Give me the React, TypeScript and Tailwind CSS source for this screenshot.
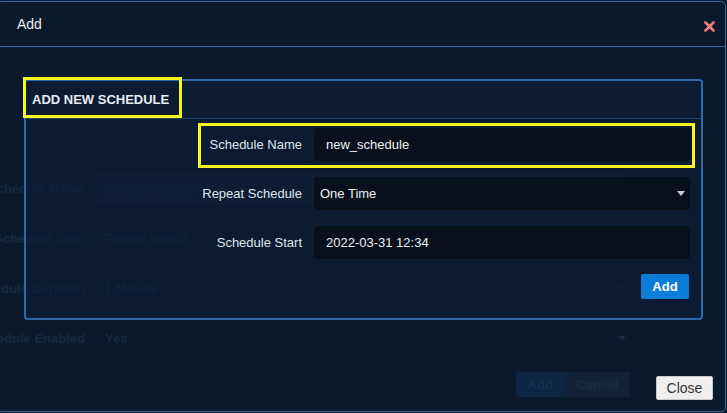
import React from "react";

function Caret({ className }: { className: string }) {
    return (
        <svg width="8" height="5" viewBox="0 0 8 5" className={className}>
            <path d="M0 0 L8 0 L4 5 Z" fill="currentColor" />
        </svg>
    );
}

const ghostRows = [
    { label: "Schedule Name", value: "new_schedule", box: true },
    { label: "Schedule Start", value: "Please Select", box: false },
    { label: "Schedule Duration", value: "1 Minute", box: false, caret: true },
    { label: "Schedule Enabled", value: "Yes", box: false, caret: true },
];

function GhostPage() {
    // the form that sits behind the modal, seen through it
    return (
        <div className="flex flex-col gap-[17px] pt-[172px] text-[13px] font-bold text-[#142943]">
            {ghostRows.map(r => (
                <div key={r.label} className="flex h-[33px] items-center">
                    <div className="flex w-[85px] shrink-0 justify-end whitespace-nowrap">{r.label}</div>
                    <div className={`ml-[10px] flex h-full w-[535px] items-center justify-between rounded-[4px] pl-[10px] pr-[4px] ${r.box ? "bg-[#0e1f33]" : ""}`}>
                        <span>{r.value}</span>
                        {r.caret && <Caret className="text-[#172a42]" />}
                    </div>
                </div>
            ))}
            <div className="ml-[516px] flex h-[25px]">
                <div className="flex w-[49px] items-center justify-center bg-[#0c2543] text-[#16304d]">Add</div>
                <div className="flex w-[65px] items-center justify-center bg-[#112238] text-[#182a40]">Cancel</div>
            </div>
        </div>
    );
}

function Field({ label, children }: { label: string; children: React.ReactNode }) {
    return (
        <div className="flex items-center gap-[12px]">
            <div className="w-[276px] text-right text-[13px] text-[#dfe5ec]">{label}</div>
            <div className="flex h-[33px] w-[376px] items-center justify-between rounded-[4px] bg-[#07101b] text-[13px] text-[#eef1f4]">
                {children}
            </div>
        </div>
    );
}

export default function App() {
    return (
        <div className="relative h-[413px] w-[727px] overflow-hidden bg-[#0a1a2c] font-['Liberation_Sans',Arial,sans-serif]">
            <GhostPage />

            <div className="absolute bottom-[1px] left-[-3px] right-[1px] top-[1px] flex flex-col rounded-[5px] border border-[#2d6aa5]">
                <div className="flex h-[45px] shrink-0 items-center justify-between border-b border-[#2d6aa5] pl-[19px] pr-[10px]">
                    <span className="text-[14px] text-[#e8edf2]">Add</span>
                    <svg width="11" height="11" viewBox="0 0 11 11" className="mt-[5px]">
                        <path d="M1.5 1.5 L9.5 9.5 M9.5 1.5 L1.5 9.5" stroke="#e06a6a" strokeWidth="3" strokeLinecap="round" />
                        <path d="M2 2 L9 9 M9 2 L2 9" stroke="#f5b5b5" strokeWidth="0.8" />
                    </svg>
                </div>

                <div className="flex flex-1 flex-col">
                    <div className="relative ml-[26px] mt-[32px] w-[679px] rounded-[4px] border-2 border-[#2d6aa5] bg-[#0c1d37]/60">
                        <div className="flex h-[38px] items-center border-b border-[#1c446c] pl-[6px] text-[13px] font-bold text-[#e8edf2]">
                            ADD NEW SCHEDULE
                        </div>
                        <div className="absolute left-[-3px] top-[-4px] h-[41px] w-[159px] border-[3px] border-[#f7f71c]" />

                        <div className="flex flex-col gap-[16px] pt-[9px]">
                            <Field label="Schedule Name">
                                <span className="pl-[12px]">new_schedule</span>
                            </Field>
                            <Field label="Repeat Schedule">
                                <span className="pl-[6px]">One Time</span>
                                <Caret className="mr-[5px] text-[#c9ced4]" />
                            </Field>
                            <Field label="Schedule Start">
                                <span className="pl-[12px]">2022-03-31 12:34</span>
                            </Field>
                        </div>
                        <div className="absolute left-[172px] top-[42px] h-[45px] w-[497px] border-[3px] border-[#f7f71c]" />

                        <div className="flex justify-end pb-[19px] pr-[12px] pt-[15px]">
                            <button className="h-[25px] w-[48px] rounded-[2px] bg-[#0b7dd8] text-[13px] font-bold text-white">Add</button>
                        </div>
                    </div>

                    <div className="mt-auto flex justify-end pb-[11px] pr-[12px]">
                        <button className="h-[24px] w-[57px] rounded-[2px] border border-[#c8c8c8] bg-[#efefef] text-[14px] text-[#333]">Close</button>
                    </div>
                </div>
            </div>
        </div>
    );
}
